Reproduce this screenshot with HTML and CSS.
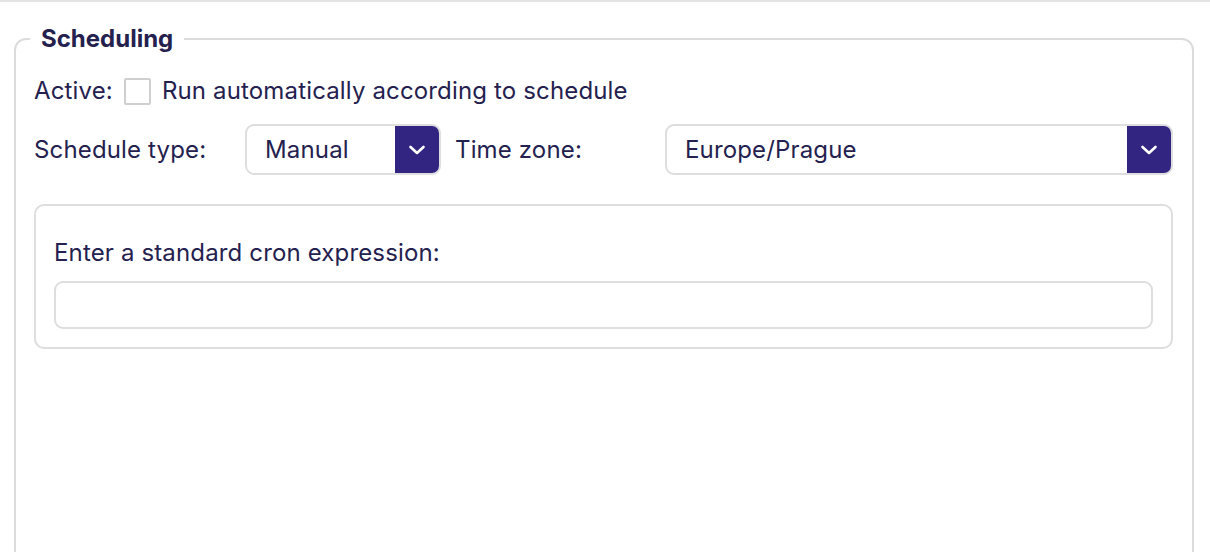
FILE: index.html
```html
<!DOCTYPE html>
<html lang="en">
<head>
<meta charset="utf-8">
<title>Scheduling</title>
<link rel="stylesheet" href="styles.css">
</head>
<body>
<div class="page">
  <fieldset class="panel">
    <legend class="panel-title">Scheduling</legend>
    <div class="row-active">
      <span class="label">Active:</span>
      <span class="checkbox"></span>
      <span class="text">Run automatically according to schedule</span>
    </div>
    <div class="row-grid">
      <span class="label">Schedule type:</span>
      <div class="select">
        <span class="select-value">Manual</span>
        <span class="select-btn"><svg width="18" height="12" viewBox="0 0 18 12"><path d="M2.5 3 L9 9 L15.5 3" fill="none" stroke="#fff" stroke-width="2.6" stroke-linecap="round" stroke-linejoin="round"/></svg></span>
      </div>
      <span class="label">Time zone:</span>
      <div class="select">
        <span class="select-value">Europe/Prague</span>
        <span class="select-btn"><svg width="18" height="12" viewBox="0 0 18 12"><path d="M2.5 3 L9 9 L15.5 3" fill="none" stroke="#fff" stroke-width="2.6" stroke-linecap="round" stroke-linejoin="round"/></svg></span>
      </div>
    </div>
    <div class="cron-box">
      <div class="cron-label">Enter a standard cron expression:</div>
      <div class="cron-input"></div>
    </div>
  </fieldset>
</div>
</body>
</html>
```

FILE: styles.css
```css
html, body {
  margin: 0;
  padding: 0;
  background: #ffffff;
}
body {
  font-family: Inter, "Noto Sans", sans-serif;
  color: #24214f;
  font-size: 24px;
  letter-spacing: 0.15px;
  line-height: 28px;
}
.page {
  border-top: 2px solid #e4e4e4;
  height: 550px;
  overflow: hidden;
  padding: 0 16px 0 14px;
}
.panel {
  margin: 23px 0 0 0;
  border: 2px solid #dcdcdc;
  border-radius: 12px;
  padding: 24px 19px 300px 18px;
  min-width: 0;
}
.panel-title {
  font-weight: 700;
  font-size: 24px;
  letter-spacing: 0;
  line-height: 28px;
  padding: 0 11px;
  margin-left: -4px;
  color: #24214f;
}
.row-active {
  display: flex;
  align-items: center;
  height: 28px;
}
.checkbox {
  box-sizing: border-box;
  width: 27px;
  height: 27px;
  border: 2px solid #cfcfcf;
  border-radius: 2px;
  margin: 0 11px 0 11px;
  background: #fff;
}
.row-grid {
  display: grid;
  grid-template-columns: 197px 196px 196px 1fr;
  column-gap: 14px;
  align-items: center;
  margin-top: 19px;
}
.select {
  box-sizing: border-box;
  height: 51px;
  border: 2px solid #dedede;
  border-radius: 9px;
  display: flex;
  align-items: stretch;
  overflow: hidden;
}
.select-value {
  flex: 1;
  display: flex;
  align-items: center;
  padding-left: 18px;
}
.select-btn {
  width: 44px;
  background: #312581;
  display: flex;
  align-items: center;
  justify-content: center;
}
.cron-box {
  margin-top: 29px;
  border: 2px solid #dedede;
  border-radius: 10px;
  padding: 33px 18px 18px 18px;
}
.cron-label {
  height: 28px;
}
.cron-input {
  box-sizing: border-box;
  margin-top: 14px;
  height: 48px;
  border: 2px solid #dedede;
  border-radius: 9px;
}
```
